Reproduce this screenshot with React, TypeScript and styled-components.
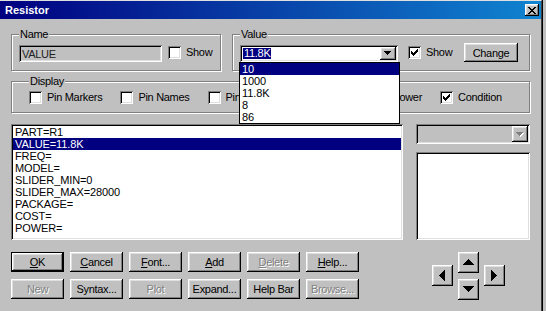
import styled, { createGlobalStyle } from 'styled-components'

const GlobalStyle = createGlobalStyle`
  html, body { margin: 0; padding: 0; background: #c0c0c0; }
  body {
    font-family: "Liberation Sans", Arial, sans-serif;
    font-size: 11px;
    color: #000;
  }
  #root { width: 546px; height: 311px; overflow: hidden; }
`

const raised = `
  box-shadow: inset -1px -1px #000, inset 1px 1px #fff, inset -2px -2px #808080, inset 2px 2px #dfdfdf;
`
const sunken = `
  box-shadow: inset 1px 1px #808080, inset -1px -1px #fff, inset 2px 2px #000, inset -2px -2px #dfdfdf;
`

const Window = styled.div`
  width: 541px;
  height: 310px;
  border-top: 1px solid #dfdfdf;
  border-right: 1px solid #404040;
  box-shadow: 1px 0 0 #000;
  background: #c0c0c0;
`

const TitleBar = styled.div`
  height: 18px;
  display: flex;
  align-items: center;
  justify-content: space-between;
  padding: 0 2px 0 5px;
  background: linear-gradient(to right, #000080, #1084d0);
  color: #fff;
  font-weight: bold;
  font-size: 11px;
`

const CloseButton = styled.div`
  width: 14px;
  height: 12px;
  background: #c0c0c0;
  display: flex;
  align-items: center;
  justify-content: center;
  ${raised}
`

const Body = styled.div`
  padding: 9px 11px 0;
  letter-spacing: -0.3px;
`

const TopRow = styled.div`
  display: flex;
  gap: 11px;
`

const Group = styled.fieldset<{ $width: number; $pad: string }>`
  margin: 0;
  min-width: 0;
  width: ${(p) => p.$width}px;
  box-sizing: border-box;
  padding: ${(p) => p.$pad};
  border: 1px solid #808080;
  box-shadow: inset 1px 1px #fff, 1px 1px #fff;
`

const Legend = styled.legend`
  padding: 0 1px;
  line-height: 13px;
  background: #c0c0c0;
`

const FieldRow = styled.div`
  display: flex;
  align-items: center;
  height: 19px;
`

const TextField = styled.div`
  width: 143px;
  height: 17px;
  margin-top: 2px;
  box-sizing: border-box;
  padding: 0 3px;
  display: flex;
  align-items: center;
  background: #c0c0c0;
  color: #202020;
  ${sunken}
`

const Combo = styled.div<{ $width: number; $height: number; $disabled?: boolean }>`
  position: relative;
  width: ${(p) => p.$width}px;
  height: ${(p) => p.$height}px;
  box-sizing: border-box;
  padding: 2px;
  display: flex;
  background: ${(p) => (p.$disabled ? '#c0c0c0' : '#fff')};
  ${sunken}
`

const ComboText = styled.div`
  flex: 1;
  display: flex;
  align-items: center;
  padding-left: 1px;
`

const Selected = styled.span`
  background: #000080;
  color: #fff;
  line-height: 11px;
  padding: 0 1px;
`

const DropButton = styled.div`
  width: 16px;
  background: #c0c0c0;
  display: flex;
  align-items: center;
  justify-content: center;
  ${raised}
`

const DropList = styled.div`
  position: absolute;
  top: 100%;
  left: -1px;
  width: 161px;
  box-sizing: border-box;
  border: 1px solid #000;
  background: #fff;
  z-index: 10;
  letter-spacing: -0.1px;
`

const ListRow = styled.div<{ $selected?: boolean }>`
  height: 12px;
  line-height: 12px;
  padding-left: 2px;
  white-space: nowrap;
  background: ${(p) => (p.$selected ? '#000080' : 'transparent')};
  color: ${(p) => (p.$selected ? '#fff' : '#000')};
`

const CheckField = styled.label<{ $offset?: number }>`
  display: inline-flex;
  align-items: center;
  gap: 5px;
  line-height: 13px;
  white-space: nowrap;
  margin-left: ${(p) => p.$offset ?? 0}px;
`

const Box = styled.span`
  width: 13px;
  height: 13px;
  flex-shrink: 0;
  background: #fff;
  display: flex;
  align-items: center;
  justify-content: center;
  ${sunken}
`

const Button = styled.div<{ $default?: boolean; $disabled?: boolean; $width?: number }>`
  width: ${(p) => (p.$width ? `${p.$width}px` : 'auto')};
  height: 100%;
  box-sizing: border-box;
  display: flex;
  align-items: center;
  justify-content: center;
  background: #c0c0c0;
  white-space: nowrap;
  color: ${(p) => (p.$disabled ? '#808080' : '#000')};
  text-shadow: ${(p) => (p.$disabled ? '1px 1px #fff' : 'none')};
  ${(p) =>
    p.$default
      ? 'box-shadow: inset 0 0 0 1px #000, inset -2px -2px #000, inset 2px 2px #fff, inset -3px -3px #808080, inset 3px 3px #dfdfdf;'
      : raised}
`

const ChangeButton = styled(Button)`
  height: 19px;
  margin-left: auto;
`

const DisplayGroup = styled(Group)`
  margin-top: 4px;
`

const DisplayRow = styled.div`
  display: flex;
  align-items: center;
  gap: 18px;
  height: 13px;
`

const Middle = styled.div`
  display: flex;
  gap: 13px;
  height: 116px;
  margin-top: 11px;
`

const AttrList = styled.div`
  width: 392px;
  box-sizing: border-box;
  padding: 2px;
  background: #fff;
  letter-spacing: -0.1px;
  ${sunken}
`

const SideColumn = styled.div`
  width: 114px;
  display: flex;
  flex-direction: column;
  gap: 8px;
`

const InfoBox = styled.div`
  flex: 1;
  background: #fff;
  ${sunken}
`

const Bottom = styled.div`
  display: flex;
  margin-top: 12px;
`

const ButtonGrid = styled.div`
  display: grid;
  grid-template-columns: repeat(6, 53px);
  grid-auto-rows: 20px;
  column-gap: 6px;
  row-gap: 7px;
`

const ArrowPad = styled.div`
  margin-left: 73px;
  display: grid;
  grid-template-columns: repeat(3, 21px);
  grid-template-rows: 20px 20px;
  column-gap: 5px;
  row-gap: 7px;
`

const PadButton = styled.div<{ $col: number; $row: string }>`
  grid-column: ${(p) => p.$col};
  grid-row: ${(p) => p.$row};
  align-self: center;
  height: 21px;
  background: #c0c0c0;
  display: flex;
  align-items: center;
  justify-content: center;
  ${raised}
`

// stacked pixel rows, so the arrow stays crisp
function triangle(rows: number, dir: 'up' | 'down' | 'left' | 'right') {
  const size = rows * 2 - 1
  let d = ''
  for (let i = 0; i < rows; i++) {
    const len = i * 2 + 1
    const off = rows - 1 - i
    if (dir === 'up') d += `M${off} ${i}h${len}v1H${off}z`
    if (dir === 'down') d += `M${off} ${rows - 1 - i}h${len}v1H${off}z`
    if (dir === 'left') d += `M${i} ${off}v${len}h1V${off}z`
    if (dir === 'right') d += `M${rows - 1 - i} ${off}v${len}h1V${off}z`
  }
  const vertical = dir === 'up' || dir === 'down'
  return { d, w: vertical ? size : rows, h: vertical ? rows : size }
}

function Arrow({ rows, dir, disabled }: { rows: number; dir: 'up' | 'down' | 'left' | 'right'; disabled?: boolean }) {
  const t = triangle(rows, dir)
  return (
    <svg width={t.w + 1} height={t.h + 1} shapeRendering="crispEdges">
      {disabled && <path d={t.d} fill="#fff" transform="translate(1 1)" />}
      <path d={t.d} fill={disabled ? '#808080' : '#000'} />
    </svg>
  )
}

function CheckMark() {
  return (
    <svg width="7" height="7" shapeRendering="crispEdges">
      <path
        d="M0 2h1v3H0zM1 3h1v3H1zM2 4h1v3H2zM3 3h1v3H3zM4 2h1v3H4zM5 1h1v3H5zM6 0h1v3H6z"
        fill="#000"
      />
    </svg>
  )
}

function CloseGlyph() {
  return (
    <svg width="8" height="7" shapeRendering="crispEdges">
      <path
        d="M0 0h2v1H0zM6 0h2v1H6zM1 1h2v1H1zM5 1h2v1H5zM2 2h4v1H2zM3 3h2v1H3zM2 4h4v1H2zM1 5h2v1H1zM5 5h2v1H5zM0 6h2v1H0zM6 6h2v1H6z"
        fill="#000"
      />
    </svg>
  )
}

function Check({ label, checked, offset }: { label: string; checked?: boolean; offset?: number }) {
  return (
    <CheckField $offset={offset}>
      <Box>{checked && <CheckMark />}</Box>
      {label}
    </CheckField>
  )
}

const values = ['10', '1000', '11.8K', '8', '86']

const attrs = [
  'PART=R1',
  'VALUE=11.8K',
  'FREQ=',
  'MODEL=',
  'SLIDER_MIN=0',
  'SLIDER_MAX=28000',
  'PACKAGE=',
  'COST=',
  'POWER=',
]

const displayOpts = [
  { label: 'Pin Markers', checked: false },
  { label: 'Pin Names', checked: false },
  { label: 'Pin Numbers', checked: false },
  { label: 'Current', checked: false },
  { label: 'Power', checked: false },
  { label: 'Condition', checked: true },
]

const buttons = [
  { label: 'OK', key: 'O', isDefault: true },
  { label: 'Cancel', key: 'C' },
  { label: 'Font...', key: 'F' },
  { label: 'Add', key: 'A' },
  { label: 'Delete', key: 'D', disabled: true },
  { label: 'Help...', key: 'H' },
  { label: 'New', disabled: true },
  { label: 'Syntax...' },
  { label: 'Plot', disabled: true },
  { label: 'Expand...' },
  { label: 'Help Bar' },
  { label: 'Browse...', disabled: true },
]

function Label({ text, hot }: { text: string; hot?: string }) {
  if (!hot) return <>{text}</>
  const i = text.indexOf(hot)
  return (
    <>
      {text.slice(0, i)}
      <u>{text[i]}</u>
      {text.slice(i + 1)}
    </>
  )
}

export default function App() {
  return (
    <>
      <GlobalStyle />
      <Window>
        <TitleBar>
          <span>Resistor</span>
          <CloseButton>
            <CloseGlyph />
          </CloseButton>
        </TitleBar>

        <Body>
          <TopRow>
            <Group $width={210} $pad="2px 7px 8px">
              <Legend>Name</Legend>
              <FieldRow>
                <TextField>VALUE</TextField>
                <Check label="Show" offset={6} />
              </FieldRow>
            </Group>

            <Group $width={298} $pad="2px 11px 8px 7px">
              <Legend>Value</Legend>
              <FieldRow>
                <Combo $width={158} $height={17} style={{ marginTop: 2 }}>
                  <ComboText>
                    <Selected>11.8K</Selected>
                  </ComboText>
                  <DropButton>
                    <Arrow rows={4} dir="down" />
                  </DropButton>
                  <DropList>
                    {values.map((v, i) => (
                      <ListRow key={v} $selected={i === 0}>
                        {v}
                      </ListRow>
                    ))}
                  </DropList>
                </Combo>
                <Check label="Show" checked offset={10} />
                <ChangeButton $width={54}>Change</ChangeButton>
              </FieldRow>
            </Group>
          </TopRow>

          <DisplayGroup $width={519} $pad="3px 7px 8px 17px">
            <Legend>Display</Legend>
            <DisplayRow>
              {displayOpts.map((o) => (
                <Check key={o.label} label={o.label} checked={o.checked} />
              ))}
            </DisplayRow>
          </DisplayGroup>

          <Middle>
            <AttrList>
              {attrs.map((a, i) => (
                <ListRow key={a} $selected={i === 1}>
                  {a}
                </ListRow>
              ))}
            </AttrList>
            <SideColumn>
              <Combo $width={114} $height={20} $disabled>
                <ComboText />
                <DropButton>
                  <Arrow rows={4} dir="down" disabled />
                </DropButton>
              </Combo>
              <InfoBox />
            </SideColumn>
          </Middle>

          <Bottom>
            <ButtonGrid>
              {buttons.map((b) => (
                <Button key={b.label} $default={b.isDefault} $disabled={b.disabled}>
                  <Label text={b.label} hot={b.key} />
                </Button>
              ))}
            </ButtonGrid>
            <ArrowPad>
              <PadButton $col={2} $row="1">
                <Arrow rows={6} dir="up" />
              </PadButton>
              <PadButton $col={1} $row="1 / span 2">
                <Arrow rows={6} dir="left" />
              </PadButton>
              <PadButton $col={3} $row="1 / span 2">
                <Arrow rows={6} dir="right" />
              </PadButton>
              <PadButton $col={2} $row="2">
                <Arrow rows={6} dir="down" />
              </PadButton>
            </ArrowPad>
          </Bottom>
        </Body>
      </Window>
    </>
  )
}
